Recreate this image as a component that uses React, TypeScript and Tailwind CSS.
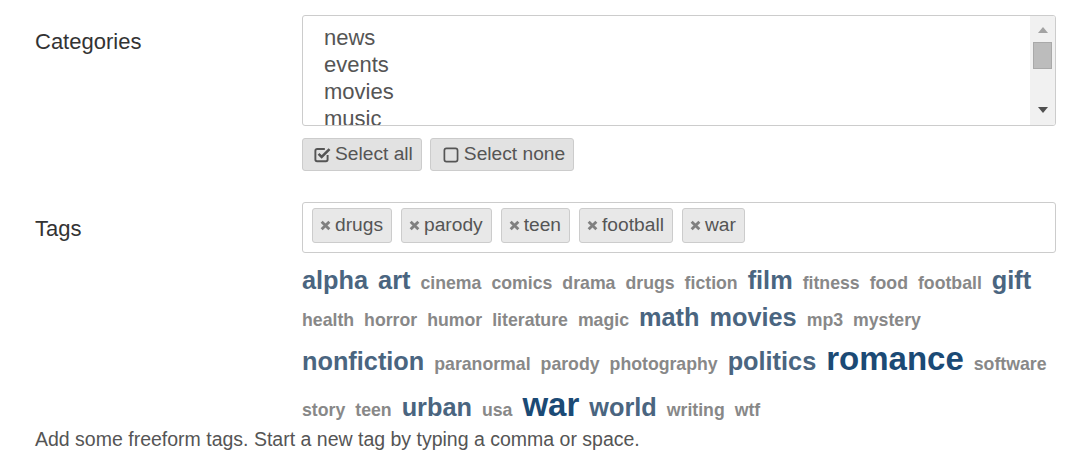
import React from "react";

type Size = "s" | "m" | "l";

const cloudRows: [string, Size][][] = [
  [
    ["alpha", "m"], ["art", "m"], ["cinema", "s"], ["comics", "s"], ["drama", "s"],
    ["drugs", "s"], ["fiction", "s"], ["film", "m"], ["fitness", "s"], ["food", "s"],
    ["football", "s"], ["gift", "m"],
  ],
  [
    ["health", "s"], ["horror", "s"], ["humor", "s"], ["literature", "s"], ["magic", "s"],
    ["math", "m"], ["movies", "m"], ["mp3", "s"], ["mystery", "s"],
  ],
  [
    ["nonfiction", "m"], ["paranormal", "s"], ["parody", "s"], ["photography", "s"],
    ["politics", "m"], ["romance", "l"], ["software", "s"],
  ],
  [
    ["story", "s"], ["teen", "s"], ["urban", "m"], ["usa", "s"], ["war", "l"],
    ["world", "m"], ["writing", "s"], ["wtf", "s"],
  ],
];

const sizeClass: Record<Size, string> = {
  s: "text-[17.7px] text-[#888888]",
  m: "text-[25.3px] text-[#4a6580]",
  l: "text-[33px] text-[#1b4a75]",
};

const categories = ["news", "events", "movies", "music"];
const selected = ["drugs", "parody", "teen", "football", "war"];

function CheckSquare() {
  return (
    <svg width="17" height="17" viewBox="0 0 16 16" fill="none">
      <path d="M12.8 8.5v4.2a1.6 1.6 0 0 1-1.6 1.6H2.9a1.6 1.6 0 0 1-1.6-1.6V4.4a1.6 1.6 0 0 1 1.6-1.6h7.3" stroke="#555" strokeWidth="1.8" />
      <path d="M4.3 7.4l2.9 2.9L14.6 2.9" stroke="#555" strokeWidth="2.4" />
    </svg>
  );
}

function Square() {
  return (
    <svg width="17" height="17" viewBox="0 0 16 16" fill="none">
      <rect x="1.3" y="2.3" width="12.4" height="12.4" rx="2" stroke="#555" strokeWidth="1.6" />
    </svg>
  );
}

function Times() {
  return (
    <svg width="11" height="11" viewBox="0 0 10 10">
      <path d="M1.5 1.5l7 7M8.5 1.5l-7 7" stroke="#808080" strokeWidth="2.6" />
    </svg>
  );
}

function Scrollbar() {
  return (
    <div className="flex w-[25px] flex-col items-center bg-[#f1f1f1]">
      <svg width="12" height="8" viewBox="0 0 12 8" className="mt-[10px]">
        <path d="M1 7h10L6 1z" fill="#a3a3a3" />
      </svg>
      <div className="mt-[8px] h-[27px] w-[19px] border border-[#a9a9a9] bg-[#bcbcbc]" />
      <div className="flex-1" />
      <svg width="12" height="8" viewBox="0 0 12 8" className="mb-[11px]">
        <path d="M1 1h10L6 7z" fill="#505050" />
      </svg>
    </div>
  );
}

export default function App() {
  return (
    <div className="min-h-[475px] bg-white pl-[35px] pr-[19px] pt-[15px] font-['Liberation_Sans',Arial,sans-serif] text-[#333]">
      <div className="grid grid-cols-[267px_1fr]">
        <div className="mt-[14px] text-[22px] leading-[25px]">Categories</div>
        <div>
          <div className="flex h-[111px] overflow-hidden rounded-[3px] border border-[#cccccc]">
            <div className="flex-1 pl-[21px] pt-[8px] text-[22px] leading-[27px] text-[#555]">
              {categories.map((c) => (
                <div key={c}>{c}</div>
              ))}
            </div>
            <Scrollbar />
          </div>
          <div className="mt-[12px] flex gap-[8px] text-[19.2px] text-[#555]">
            <button className="flex h-[33px] items-center gap-[4px] rounded-[3px] border border-[#cccccc] bg-[#e2e2e2] pl-[11px] pr-[8px]">
              <CheckSquare />
              <span>Select all</span>
            </button>
            <button className="flex h-[33px] items-center gap-[4px] rounded-[3px] border border-[#cccccc] bg-[#e2e2e2] pl-[12px] pr-[8px]">
              <Square />
              <span>Select none</span>
            </button>
          </div>
        </div>
      </div>

      <div className="mt-[31px] grid grid-cols-[267px_1fr]">
        <div className="mt-[14px] text-[22px] leading-[25px]">Tags</div>
        <div>
          <div className="flex h-[51px] gap-[9px] rounded-[3px] border border-[#cccccc] pl-[9px] pt-[5px]">
            {selected.map((t) => (
              <span
                key={t}
                className="flex h-[35px] items-center gap-[4px] rounded-[3px] border border-[#cccccc] bg-[#e8e8e8] pl-[7px] pr-[8px] text-[19.2px] text-[#555]"
              >
                <Times />
                {t}
              </span>
            ))}
          </div>
          <div className="mt-[13px] flex flex-col gap-[8px] font-bold leading-[normal]">
            {cloudRows.map((row, i) => (
              <div key={i} className="flex items-baseline gap-[10px]">
                {row.map(([t, s]) => (
                  <span key={t} className={sizeClass[s]}>
                    {t}
                  </span>
                ))}
              </div>
            ))}
          </div>
        </div>
      </div>
      <p className="mt-[4px] text-[19.5px] leading-[normal] text-[#555]">
        Add some freeform tags. Start a new tag by typing a comma or space.
      </p>
    </div>
  );
}
